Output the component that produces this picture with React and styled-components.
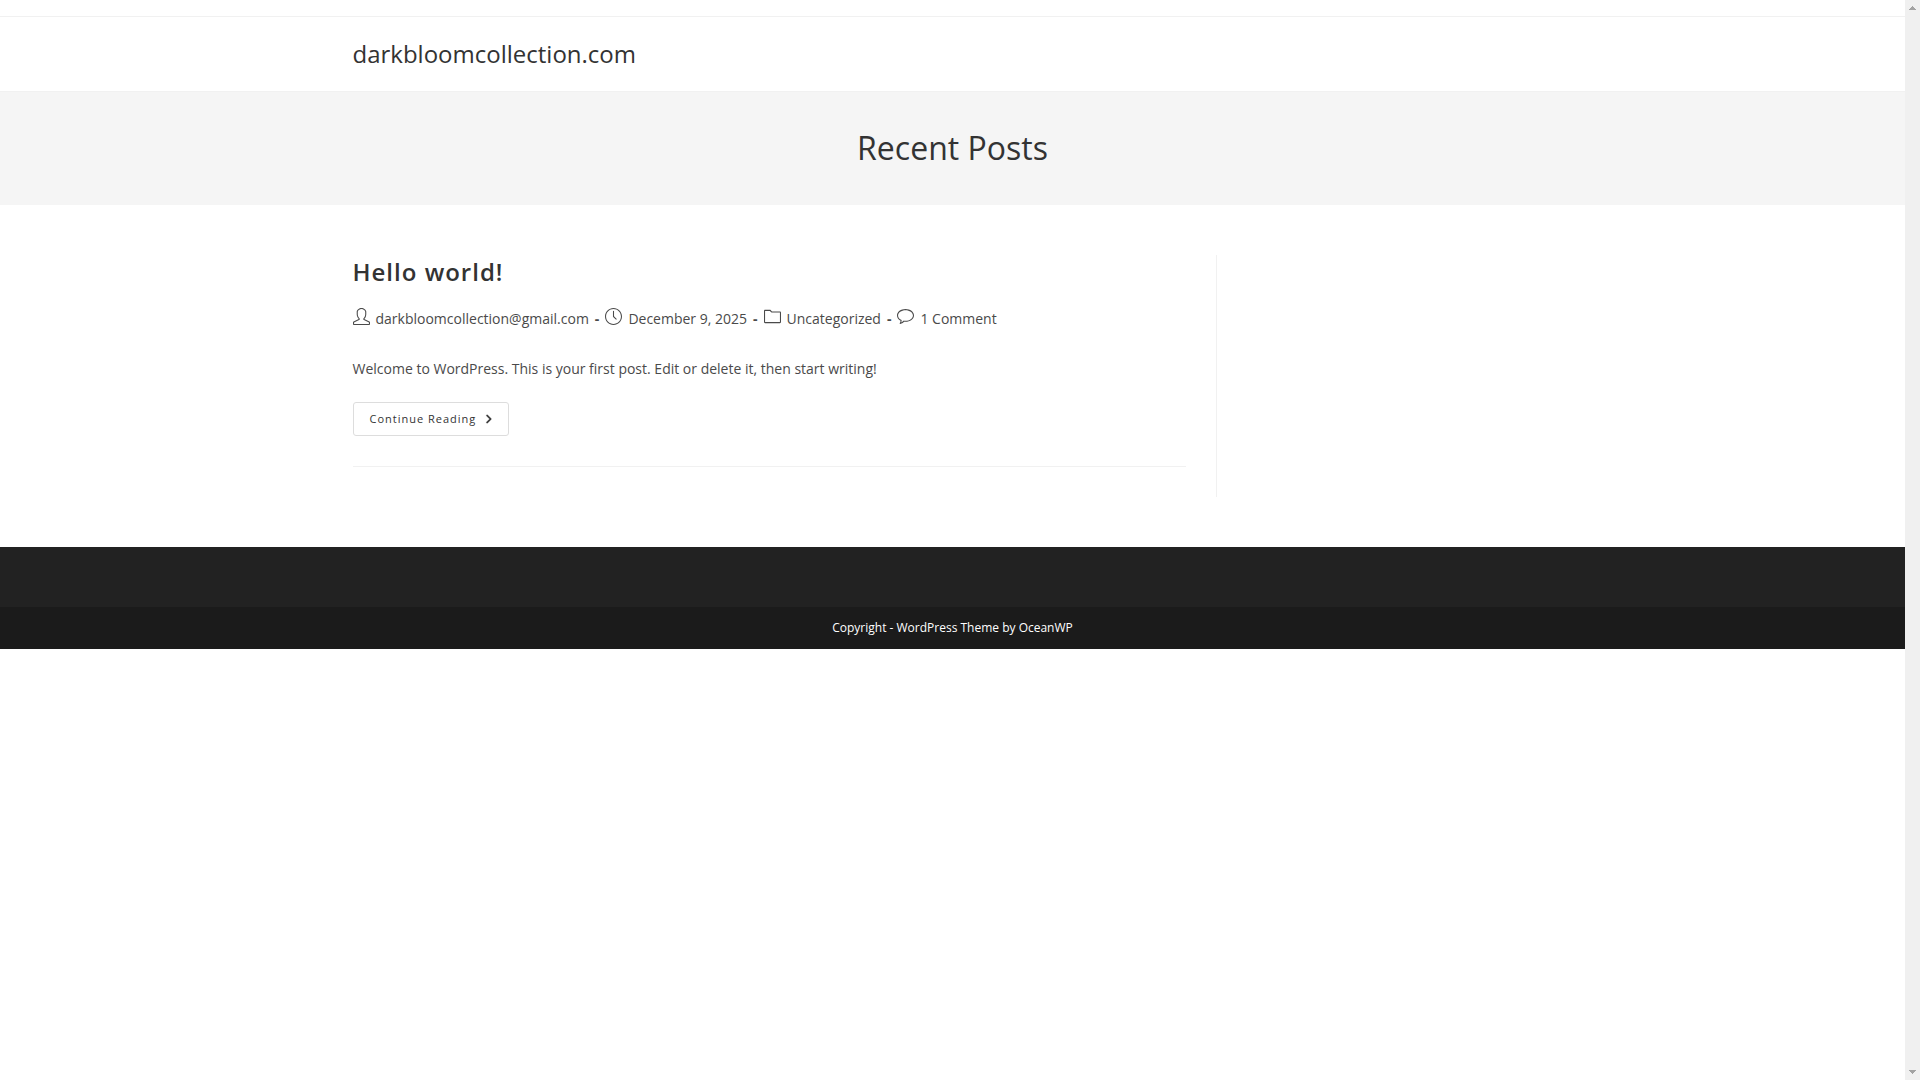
import React from 'react';
import styled, { createGlobalStyle } from 'styled-components';
import { SlUser, SlClock, SlFolder, SlBubble } from 'react-icons/sl';
import { FaAngleRight } from 'react-icons/fa6';

const GlobalStyle = createGlobalStyle`
  body {
    margin: 0;
    background: #fff;
    color: #4a4a4a;
    font-family: 'Open Sans', sans-serif;
    font-size: 14px;
    line-height: 25px;
  }

  *, *::before, *::after {
    box-sizing: border-box;
  }

  a {
    color: inherit;
    text-decoration: none;
  }
`;

const Screen = styled.div`
  display: grid;
  grid-template-columns: 1fr 15px;
`;

const Container = styled.div`
  width: 1200px;
  max-width: 90%;
  margin: 0 auto;
`;

const TopBar = styled.div`
  height: 17px;
  border-bottom: 1px solid #f1f1f1;
`;

const Header = styled.header`
  border-bottom: 1px solid #f1f1f1;
`;

const SiteTitle = styled.a`
  display: block;
  font-size: 24px;
  line-height: 74px;
  color: #333;
`;

const PageHeader = styled.div`
  padding: 34px 0 35px;
  background: #f5f5f5;
  text-align: center;
`;

const PageTitle = styled.h1`
  margin: 0;
  font-size: 32px;
  font-weight: 400;
  line-height: 44px;
  color: #333;
`;

const Content = styled(Container)`
  padding: 50px 0;
`;

const Primary = styled.main`
  display: flow-root;
  width: 72%;
  padding-right: 30px;
  border-right: 1px solid #f1f1f1;
`;

const Post = styled.article`
  margin-bottom: 30px;
  padding-bottom: 30px;
  border-bottom: 1px solid #f1f1f1;
`;

const PostTitle = styled.h2`
  margin: 0 0 16px;
  font-size: 24px;
  font-weight: 600;
  line-height: 34px;
  letter-spacing: 1px;
  color: #333;
`;

const MetaList = styled.ul`
  display: flex;
  flex-wrap: wrap;
  margin: 0 0 23px;
  padding: 0;
  list-style: none;
  line-height: 27px;
`;

const MetaItem = styled.li`
  display: flex;

  svg {
    width: 17px;
    height: 17px;
    margin: 3px 6px 0 0;
  }

  &:not(:last-child)::after {
    content: '-';
    padding: 0 6px;
    font-weight: 700;
  }
`;

const Summary = styled.p`
  margin: 0 0 20px;
  line-height: 27px;
`;

const ReadMore = styled.a`
  display: inline-flex;
  align-items: center;
  gap: 9px;
  height: 34px;
  padding: 0 16px 1px;
  border: 1px solid #ddd;
  border-radius: 3px;
  font-size: 11px;
  letter-spacing: 1px;
  vertical-align: top;
  color: #333;

  svg {
    width: 7px;
    height: 12px;
    stroke: currentColor;
    stroke-width: 16px;
  }
`;

const FooterWidgets = styled.div`
  height: 60px;
  background: #222;
`;

const FooterBottom = styled.div`
  padding: 15px 0;
  background: #1b1b1b;
  color: #fff;
  font-size: 12px;
  line-height: 12px;
  text-align: center;
`;

const ScrollTrack = styled.div`
  position: sticky;
  top: 0;
  display: flex;
  flex-direction: column;
  align-items: center;
  justify-content: space-between;
  height: 100vh;
  padding: 6px 0;
  background: #f0f0f0;
`;

const meta = [
  { icon: SlUser, label: 'darkbloomcollection@gmail.com', link: true },
  { icon: SlClock, label: 'December 9, 2025' },
  { icon: SlFolder, label: 'Uncategorized', link: true },
  { icon: SlBubble, label: '1 Comment', link: true },
];

const Arrow = ({ d }) => (
  <svg width="7" height="4" viewBox="0 0 7 4" fill="#a3a3a3" shapeRendering="crispEdges" aria-hidden="true">
    <path d={d} />
  </svg>
);

const App = () => (
  <Screen>
    <GlobalStyle />
    <div>
      <TopBar />
      <Header>
        <Container>
          <SiteTitle href="#">darkbloomcollection.com</SiteTitle>
        </Container>
      </Header>
      <PageHeader>
        <PageTitle>Recent Posts</PageTitle>
      </PageHeader>
      <Content>
        <Primary>
          <Post>
            <PostTitle>
              <a href="#">Hello world!</a>
            </PostTitle>
            <MetaList>
              {meta.map(({ icon: Icon, label, link }) => (
                <MetaItem key={label}>
                  <Icon aria-hidden="true" />
                  {link ? <a href="#">{label}</a> : label}
                </MetaItem>
              ))}
            </MetaList>
            <Summary>
              Welcome to WordPress. This is your first post. Edit or delete it, then start writing!
            </Summary>
            <ReadMore href="#">
              Continue Reading
              <FaAngleRight aria-hidden="true" />
            </ReadMore>
          </Post>
        </Primary>
      </Content>
      <footer>
        <FooterWidgets />
        <FooterBottom>Copyright - WordPress Theme by OceanWP</FooterBottom>
      </footer>
    </div>
    <ScrollTrack>
      <Arrow d="M3 0h1v1h1v1h1v1h1v1H0V3h1V2h1V1h1z" />
      <Arrow d="M0 0h7v1H6v1H5v1H4v1H3V3H2V2H1V1H0z" />
    </ScrollTrack>
  </Screen>
);

export default App;
